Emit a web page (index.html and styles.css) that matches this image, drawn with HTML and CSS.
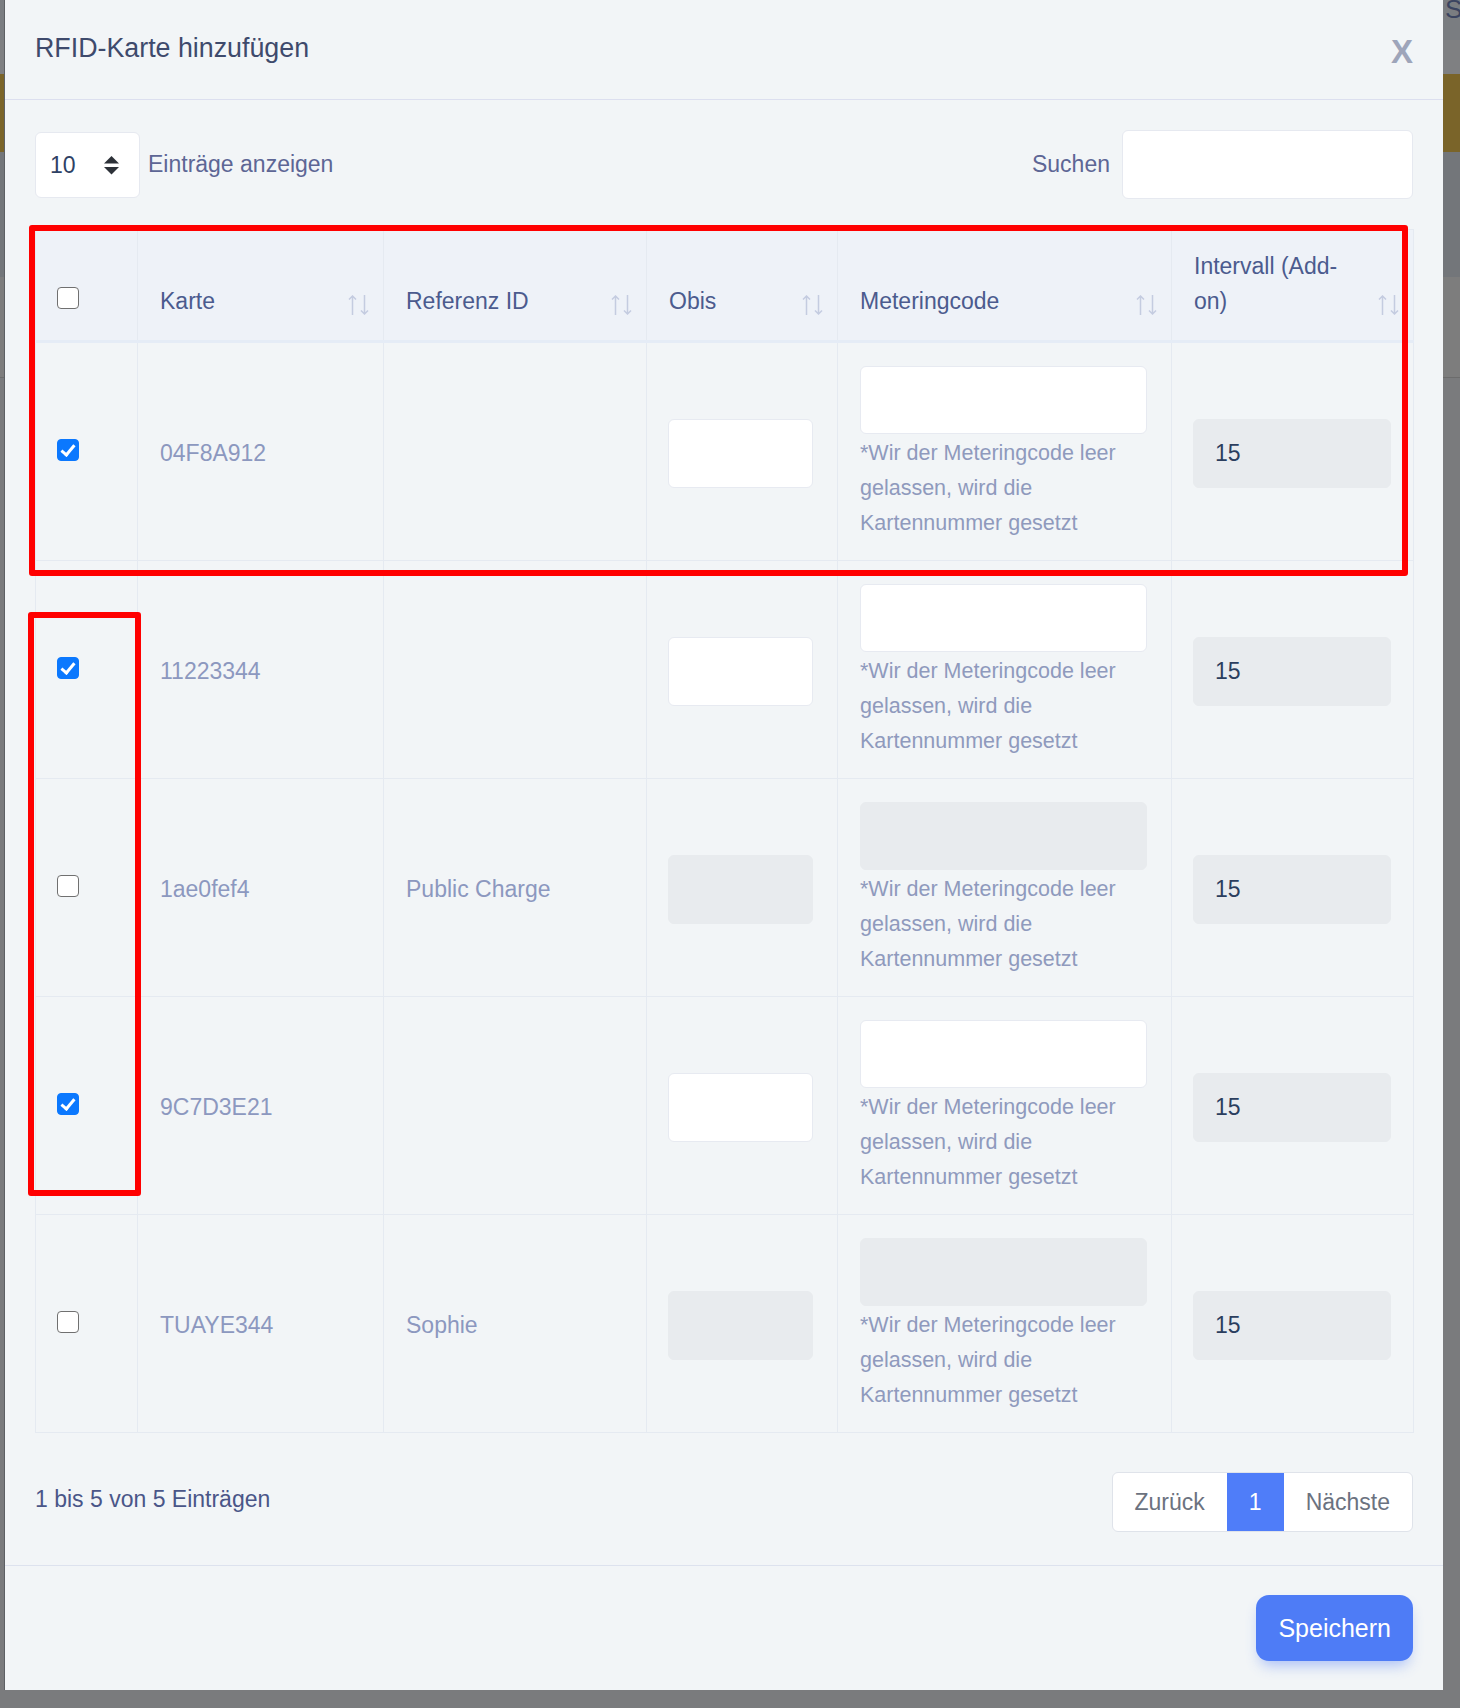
FILE: index.html
```html
<!DOCTYPE html>
<html lang="de">
<head>
    <meta charset="UTF-8">
    <meta name="viewport" content="width=device-width, initial-scale=1.0">
    <title>RFID-Karte hinzufügen</title>
    <link rel="stylesheet" href="styles.css">
</head>
<body>
    <!-- page behind the dimmed overlay -->
    <div class="backdrop">
        <div class="band band-top"><span class="band-text">Suchen</span></div>
        <div class="band band-nav"></div>
        <div class="band band-gold"></div>
        <div class="band band-dark"></div>
        <div class="band band-mid"></div>
        <div class="band band-rest"></div>
    </div>

    <div class="modal">
        <div class="modal-header">
            <h2 class="modal-title">RFID-Karte hinzufügen</h2>
            <button class="close" type="button">X</button>
        </div>

        <div class="modal-body">
            <div class="table-controls">
                <label class="length">
                    <span class="select-wrap">
                        <select class="length-select">
                            <option>10</option>
                            <option>25</option>
                            <option>50</option>
                        </select>
                        <svg class="select-arrows" width="15" height="19" viewBox="0 0 15 19">
                            <path d="M0 7.5 L7.5 0 L15 7.5 Z" fill="#2d3138"/>
                            <path d="M0 11 L15 11 L7.5 18.5 Z" fill="#2d3138"/>
                        </svg>
                    </span>
                    Einträge anzeigen
                </label>
                <label class="search">Suchen <input type="text"></label>
            </div>

            <table class="cards">
                <colgroup>
                    <col style="width:102px">
                    <col style="width:246px">
                    <col style="width:263px">
                    <col style="width:191px">
                    <col style="width:334px">
                    <col style="width:242px">
                </colgroup>
                <thead>
                    <tr>
                        <th class="col-check"><input class="check" type="checkbox"></th>
                        <th><div class="th-inner"><span>Karte</span><svg class="sort" width="21" height="20" viewBox="0 0 21 20"><path d="M4.5 20V1 M1 4.5L4.5 1L8 4.5 M16.5 0V19 M13 15.5L16.5 19L20 15.5" fill="none" stroke="#c4cce0" stroke-width="1.5"/></svg></div></th>
                        <th><div class="th-inner"><span>Referenz ID</span><svg class="sort" width="21" height="20" viewBox="0 0 21 20"><path d="M4.5 20V1 M1 4.5L4.5 1L8 4.5 M16.5 0V19 M13 15.5L16.5 19L20 15.5" fill="none" stroke="#c4cce0" stroke-width="1.5"/></svg></div></th>
                        <th><div class="th-inner"><span>Obis</span><svg class="sort" width="21" height="20" viewBox="0 0 21 20"><path d="M4.5 20V1 M1 4.5L4.5 1L8 4.5 M16.5 0V19 M13 15.5L16.5 19L20 15.5" fill="none" stroke="#c4cce0" stroke-width="1.5"/></svg></div></th>
                        <th><div class="th-inner"><span>Meteringcode</span><svg class="sort" width="21" height="20" viewBox="0 0 21 20"><path d="M4.5 20V1 M1 4.5L4.5 1L8 4.5 M16.5 0V19 M13 15.5L16.5 19L20 15.5" fill="none" stroke="#c4cce0" stroke-width="1.5"/></svg></div></th>
                        <th><div class="th-inner"><span>Intervall (Add-on)</span><svg class="sort" width="21" height="20" viewBox="0 0 21 20"><path d="M4.5 20V1 M1 4.5L4.5 1L8 4.5 M16.5 0V19 M13 15.5L16.5 19L20 15.5" fill="none" stroke="#c4cce0" stroke-width="1.5"/></svg></div></th>
                    </tr>
                </thead>
                <tbody>
                    <tr>
                        <td class="col-check"><input class="check" type="checkbox" checked></td>
                        <td>04F8A912</td>
                        <td></td>
                        <td><input class="field obis" type="text"></td>
                        <td><input class="field metering" type="text"><span class="hint">*Wir der Meteringcode leer gelassen, wird die Kartennummer gesetzt</span></td>
                        <td><input class="field interval" type="text" value="15" readonly></td>
                    </tr>
                    <tr>
                        <td class="col-check"><input class="check" type="checkbox" checked></td>
                        <td>11223344</td>
                        <td></td>
                        <td><input class="field obis" type="text"></td>
                        <td><input class="field metering" type="text"><span class="hint">*Wir der Meteringcode leer gelassen, wird die Kartennummer gesetzt</span></td>
                        <td><input class="field interval" type="text" value="15" readonly></td>
                    </tr>
                    <tr>
                        <td class="col-check"><input class="check" type="checkbox"></td>
                        <td>1ae0fef4</td>
                        <td>Public Charge</td>
                        <td><input class="field obis" type="text" disabled></td>
                        <td><input class="field metering" type="text" disabled><span class="hint">*Wir der Meteringcode leer gelassen, wird die Kartennummer gesetzt</span></td>
                        <td><input class="field interval" type="text" value="15" readonly></td>
                    </tr>
                    <tr>
                        <td class="col-check"><input class="check" type="checkbox" checked></td>
                        <td>9C7D3E21</td>
                        <td></td>
                        <td><input class="field obis" type="text"></td>
                        <td><input class="field metering" type="text"><span class="hint">*Wir der Meteringcode leer gelassen, wird die Kartennummer gesetzt</span></td>
                        <td><input class="field interval" type="text" value="15" readonly></td>
                    </tr>
                    <tr>
                        <td class="col-check"><input class="check" type="checkbox"></td>
                        <td>TUAYE344</td>
                        <td>Sophie</td>
                        <td><input class="field obis" type="text" disabled></td>
                        <td><input class="field metering" type="text" disabled><span class="hint">*Wir der Meteringcode leer gelassen, wird die Kartennummer gesetzt</span></td>
                        <td><input class="field interval" type="text" value="15" readonly></td>
                    </tr>
                </tbody>
            </table>

            <div class="table-footer">
                <div class="info">1 bis 5 von 5 Einträgen</div>
                <div class="pager">
                    <a href="#">Zurück</a>
                    <a href="#" class="active">1</a>
                    <a href="#">Nächste</a>
                </div>
            </div>
        </div>

        <div class="modal-footer">
            <button class="save" type="button">Speichern</button>
        </div>

        <!-- highlight frames -->
        <div class="mark mark-row"></div>
        <div class="mark mark-col"></div>
    </div>
</body>
</html>
```

FILE: styles.css
```css
* {
    box-sizing: border-box;
}
body {
    margin: 0;
    height: 1708px;
    overflow: hidden;
    position: relative;
    font-family: "Liberation Sans", Arial, sans-serif;
    background-color: #77797d;
}

/* dimmed page behind the modal */
.band {
    position: relative;
    overflow: hidden;
}
.band-top {
    height: 40px;
    background-color: #7a7d81;
}
.band-text {
    position: absolute;
    left: 1445px;
    top: -4px;
    font-size: 26px;
    line-height: 26px;
    color: #3b4460;
}
.band-nav {
    height: 34px;
    background-color: #7f8082;
}
.band-gold {
    height: 78px;
    background-color: #7a6429;
}
.band-dark {
    height: 125px;
    background-color: #73767a;
}
.band-mid {
    height: 101px;
    background-color: #7d7d7d;
    border-bottom: 1px solid #6c6c6c;
}
.band-rest {
    height: 1330px;
    background-color: #7a7b7d;
}

/* modal */
.modal {
    position: absolute;
    left: 5px;
    top: 0;
    width: 1438px;
    background-color: #f2f5f7;
    box-shadow: -1px 0 0 #5d6064;
    color: #4a5688;
}
.modal-header {
    height: 100px;
    padding: 0 30px;
    display: flex;
    align-items: center;
    justify-content: space-between;
    border-bottom: 1px solid #dcdfef;
}
.modal-title {
    margin: 0 0 3px;
    font-size: 26.8px;
    font-weight: 400;
    color: #3e4a6c;
}
.close {
    border: none;
    background: none;
    padding: 0;
    margin-top: 3px;
    font-family: "Liberation Sans", Arial, sans-serif;
    font-size: 33px;
    font-weight: 700;
    line-height: 1;
    color: #9ea5ba;
    cursor: pointer;
}
.modal-body {
    padding: 30px 30px 33px;
    border-bottom: 1px solid #dde2ee;
}

/* length + search */
.table-controls {
    display: flex;
    justify-content: space-between;
    align-items: center;
    height: 69px;
    font-size: 23px;
    color: #5d6695;
}
.length {
    display: flex;
    align-items: center;
    gap: 8px;
}
.select-wrap {
    position: relative;
    display: block;
}
.length-select {
    appearance: none;
    -webkit-appearance: none;
    display: block;
    width: 105px;
    height: 66px;
    padding: 0 0 0 14px;
    border: 1px solid #e6e9f0;
    border-radius: 6px;
    background-color: #fff;
    font-family: "Liberation Sans", Arial, sans-serif;
    font-size: 23px;
    color: #2e4164;
}
.select-arrows {
    position: absolute;
    left: 69px;
    top: 24px;
    pointer-events: none;
}
.search {
    display: flex;
    align-items: center;
    gap: 12px;
}
.search input {
    width: 291px;
    height: 69px;
    border: 1px solid #e6e9f0;
    border-radius: 6px;
    background-color: #fff;
}

/* table */
.cards {
    width: 100%;
    margin-top: 30px;
    border-collapse: collapse;
    table-layout: fixed;
    font-size: 23px;
}
.cards th,
.cards td {
    border: 1px solid #e5eaf1;
}
.cards th {
    background-color: #eef2f8;
    font-weight: 400;
    color: #4b5b8e;
    text-align: left;
    vertical-align: bottom;
    line-height: 35px;
    padding: 19px 14px 21px 22px;
    border-bottom: 3px solid #e5ecf6;
}
.th-inner {
    display: flex;
    justify-content: space-between;
    align-items: flex-end;
    gap: 12px;
}
.sort {
    flex: none;
    margin-bottom: 4px;
}
.cards td {
    padding: 23px 24px 19px 22px;
    vertical-align: middle;
    line-height: 35px;
    color: #8c98bf;
}
.cards th.col-check,
.cards td.col-check {
    padding-left: 21px;
}
.cards th .check {
    margin-bottom: 10px;
}
.cards td .check {
    margin-bottom: 8px;
}

/* checkboxes */
.check {
    appearance: none;
    -webkit-appearance: none;
    display: block;
    position: relative;
    width: 22px;
    height: 22px;
    margin: 0;
    border: 1.5px solid #707070;
    border-radius: 4px;
    background-color: #fff;
}
.check:checked {
    background-color: #0b78fe;
    border-color: #0b78fe;
}
.check:checked::after {
    content: "";
    position: absolute;
    left: 6px;
    top: 2px;
    width: 5px;
    height: 11px;
    border: solid #fff;
    border-width: 0 3px 3px 0;
    transform: rotate(40deg);
}

/* inputs */
.field {
    display: block;
    height: 68px;
    border: 1px solid #e7eaf1;
    border-radius: 6px;
    background-color: #fff;
    font-family: "Liberation Sans", Arial, sans-serif;
    font-size: 23px;
    color: #2b3e5e;
}
.field:disabled {
    background-color: #e8ebee;
    border-color: #e8ebee;
}
.obis {
    width: 145px;
    height: 69px;
    margin-left: -1px;
}
.metering {
    width: 100%;
    margin-bottom: 2px;
}
.interval {
    width: 198px;
    height: 69px;
    margin-left: -1px;
    padding-left: 21px;
    background-color: #e8ebee;
    border-color: #e8ebee;
}
.hint {
    display: block;
    font-size: 21.5px;
    line-height: 35px;
    color: #8f9abd;
}

/* info + pagination */
.table-footer {
    display: flex;
    justify-content: space-between;
    align-items: center;
    margin-top: 39px;
    font-size: 23px;
}
.info {
    padding-bottom: 5px;
    color: #4a5688;
}
.pager {
    display: flex;
    height: 60px;
    border: 1px solid #dfe3ea;
    border-radius: 6px;
    background-color: #fff;
    overflow: hidden;
}
.pager a {
    display: flex;
    align-items: center;
    padding: 0 22px;
    color: #6b7280;
    text-decoration: none;
}
.pager a.active {
    background-color: #4f7df9;
    color: #fff;
}

/* footer */
.modal-footer {
    height: 124px;
    padding: 0 30px;
    display: flex;
    align-items: center;
    justify-content: flex-end;
}
.save {
    height: 66px;
    padding: 0 22px;
    border: none;
    border-radius: 13px;
    background-color: #4e7cf6;
    color: #fff;
    font-family: "Liberation Sans", Arial, sans-serif;
    font-size: 25px;
    box-shadow: 0 8px 14px -4px rgba(78, 124, 246, 0.45);
    cursor: pointer;
}

/* red highlight frames */
.mark {
    position: absolute;
    border: 6px solid #ff0000;
    border-radius: 3px;
    pointer-events: none;
}
.mark-row {
    left: 24px;
    top: 225px;
    width: 1379px;
    height: 351px;
}
.mark-col {
    left: 23px;
    top: 612px;
    width: 113px;
    height: 584px;
}
```
